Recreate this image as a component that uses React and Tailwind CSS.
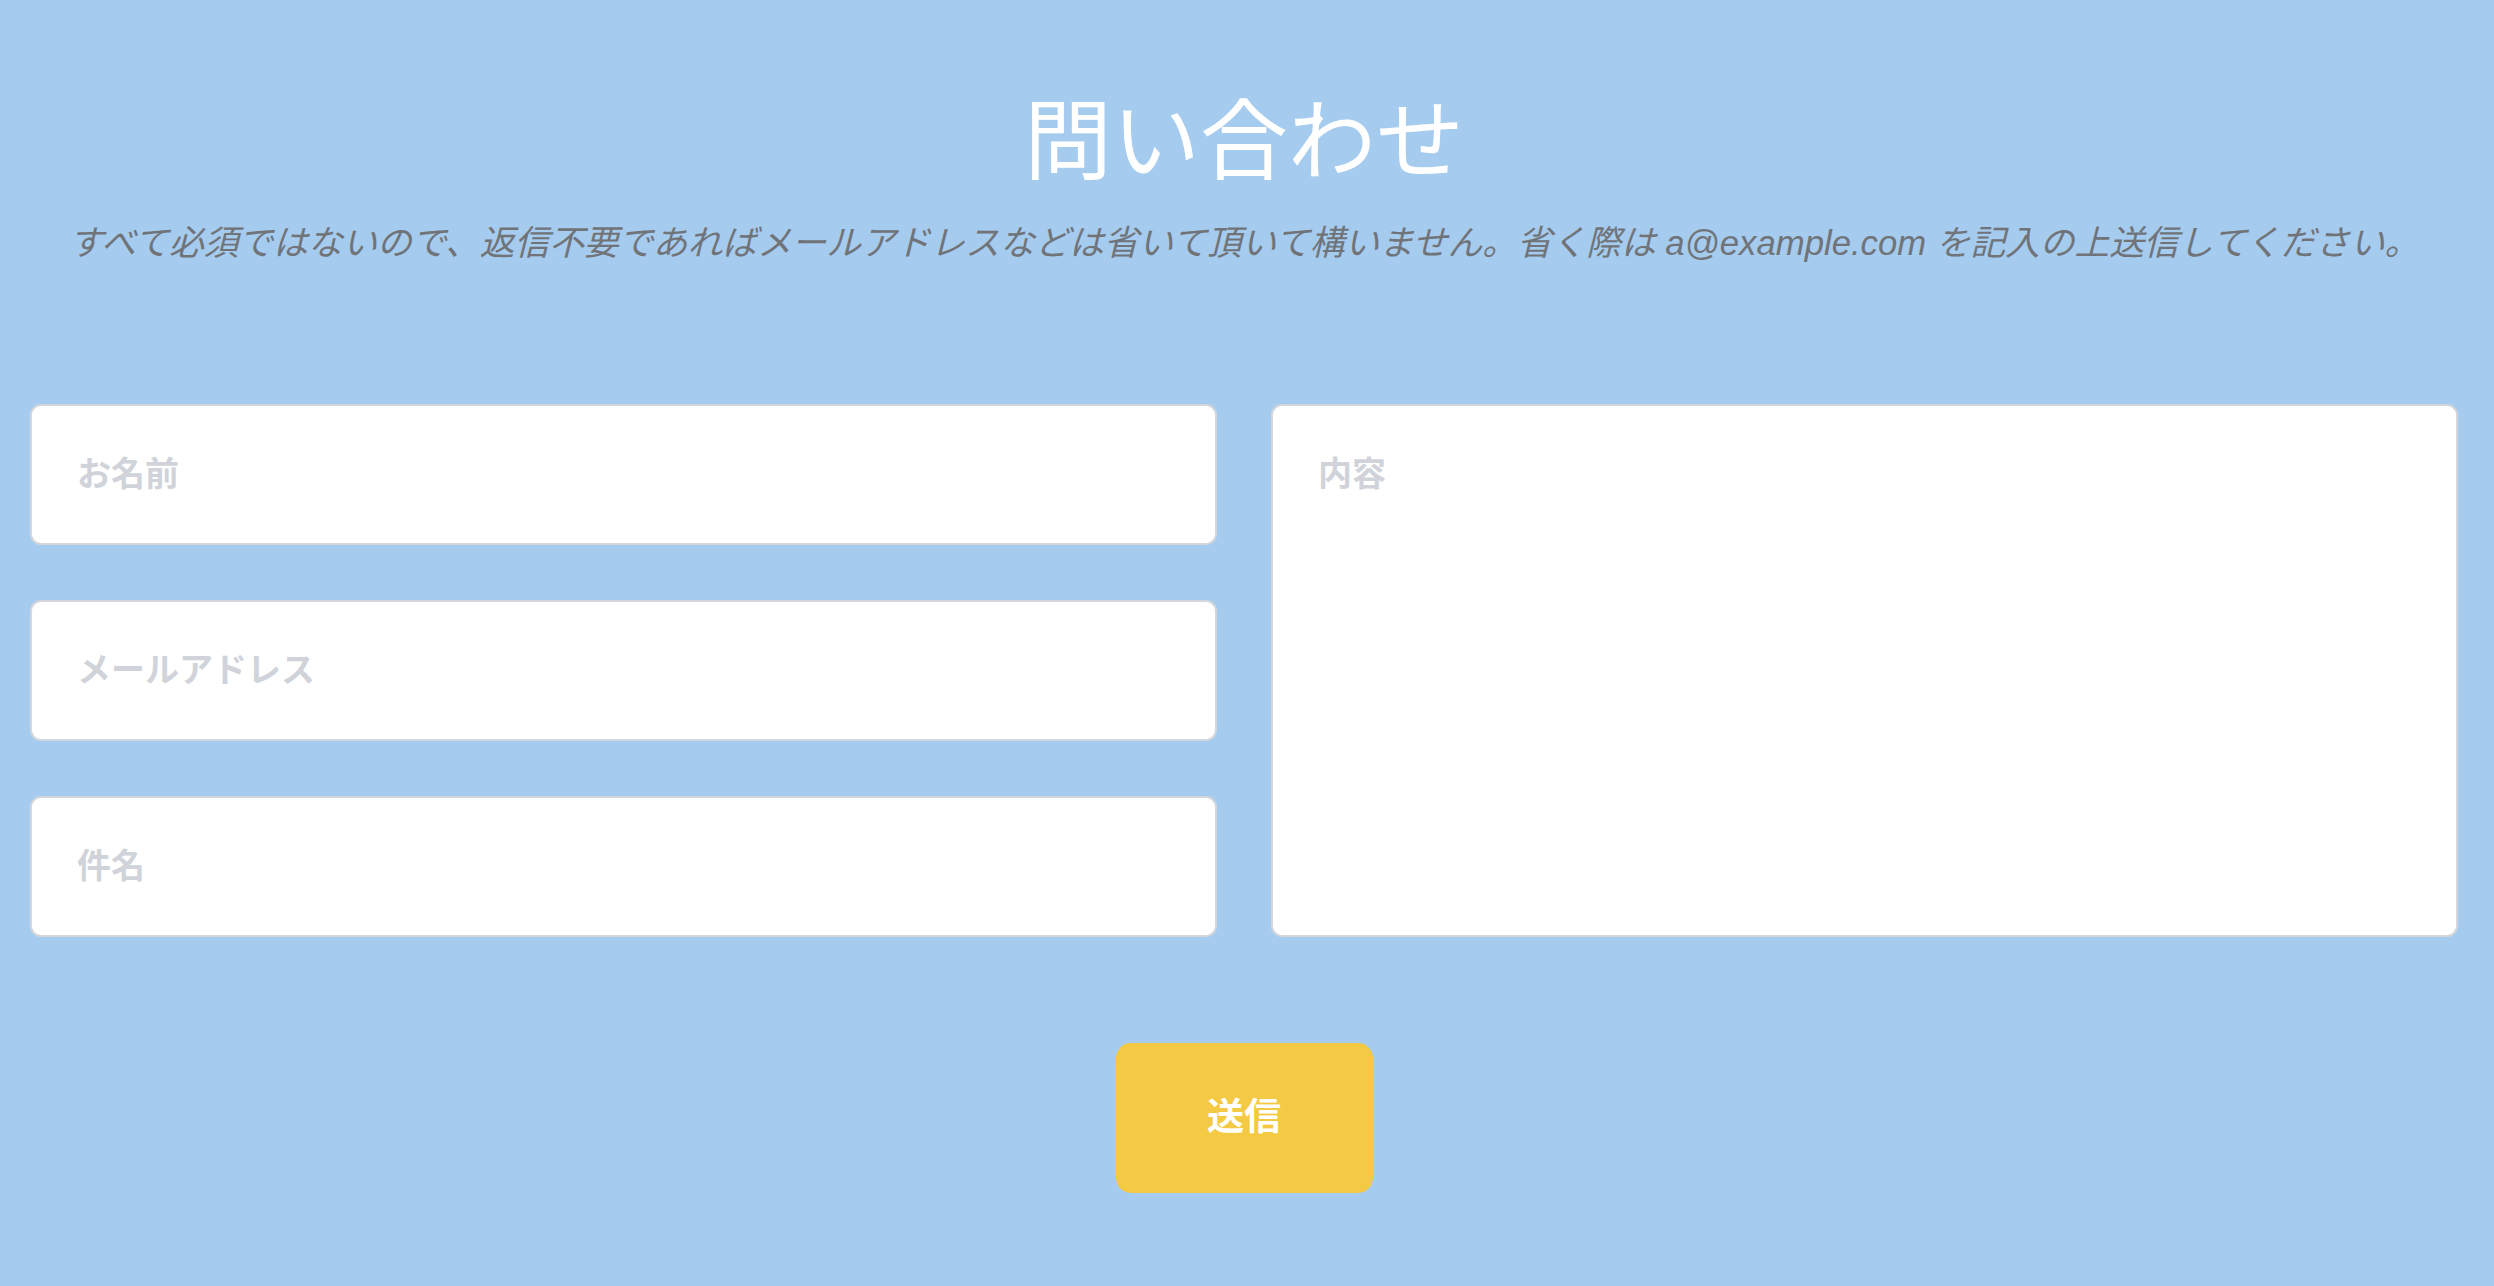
import React from "react";

const font = { fontFamily: '"Liberation Sans", "Noto Sans CJK JP", sans-serif' };

export default function App() {
  return (
    <div
      className="min-h-screen w-full bg-[#a5cbee] pl-[30px] pr-[36px] pt-[96px] pb-[80px]"
      style={font}
    >
      <h1 className="text-center text-white text-[88px] leading-[92px] font-normal">
        問い合わせ
      </h1>
      <p className="mt-[31px] text-center text-[#707479] text-[34.7px] leading-[48px] italic">
        すべて必須ではないので、返信不要であればメールアドレスなどは省いて頂いて構いません。省く際は a@example.com を記入の上送信してください。
      </p>

      <form className="mt-[137px]" onSubmit={(e) => e.preventDefault()}>
        <div className="grid grid-cols-2 gap-x-[54px]">
          <div className="flex flex-col gap-[55px]">
            <input
              type="text"
              placeholder="お名前"
              className="h-[141px] w-full rounded-[11px] border-2 border-[#d3d7dc] bg-white px-[45px] text-[34px] font-bold text-gray-700 outline-none placeholder:text-[#d0d4da]"
            />
            <input
              type="email"
              placeholder="メールアドレス"
              className="h-[141px] w-full rounded-[11px] border-2 border-[#d3d7dc] bg-white px-[45px] text-[34px] font-bold text-gray-700 outline-none placeholder:text-[#d0d4da]"
            />
            <input
              type="text"
              placeholder="件名"
              className="h-[141px] w-full rounded-[11px] border-2 border-[#d3d7dc] bg-white px-[45px] text-[34px] font-bold text-gray-700 outline-none placeholder:text-[#d0d4da]"
            />
          </div>
          <textarea
            placeholder="内容"
            className="h-[533px] w-full resize-none rounded-[11px] border-2 border-[#d3d7dc] bg-white px-[45px] pt-[44px] text-[34px] leading-[48px] font-bold text-gray-700 outline-none placeholder:text-[#d0d4da]"
          />
        </div>

        <div className="mt-[106px] flex justify-center">
          <button
            type="submit"
            className="h-[150px] w-[257px] rounded-[15px] bg-[#f4ca45] text-[37px] font-bold text-white"
          >
            送信
          </button>
        </div>
      </form>
    </div>
  );
}
